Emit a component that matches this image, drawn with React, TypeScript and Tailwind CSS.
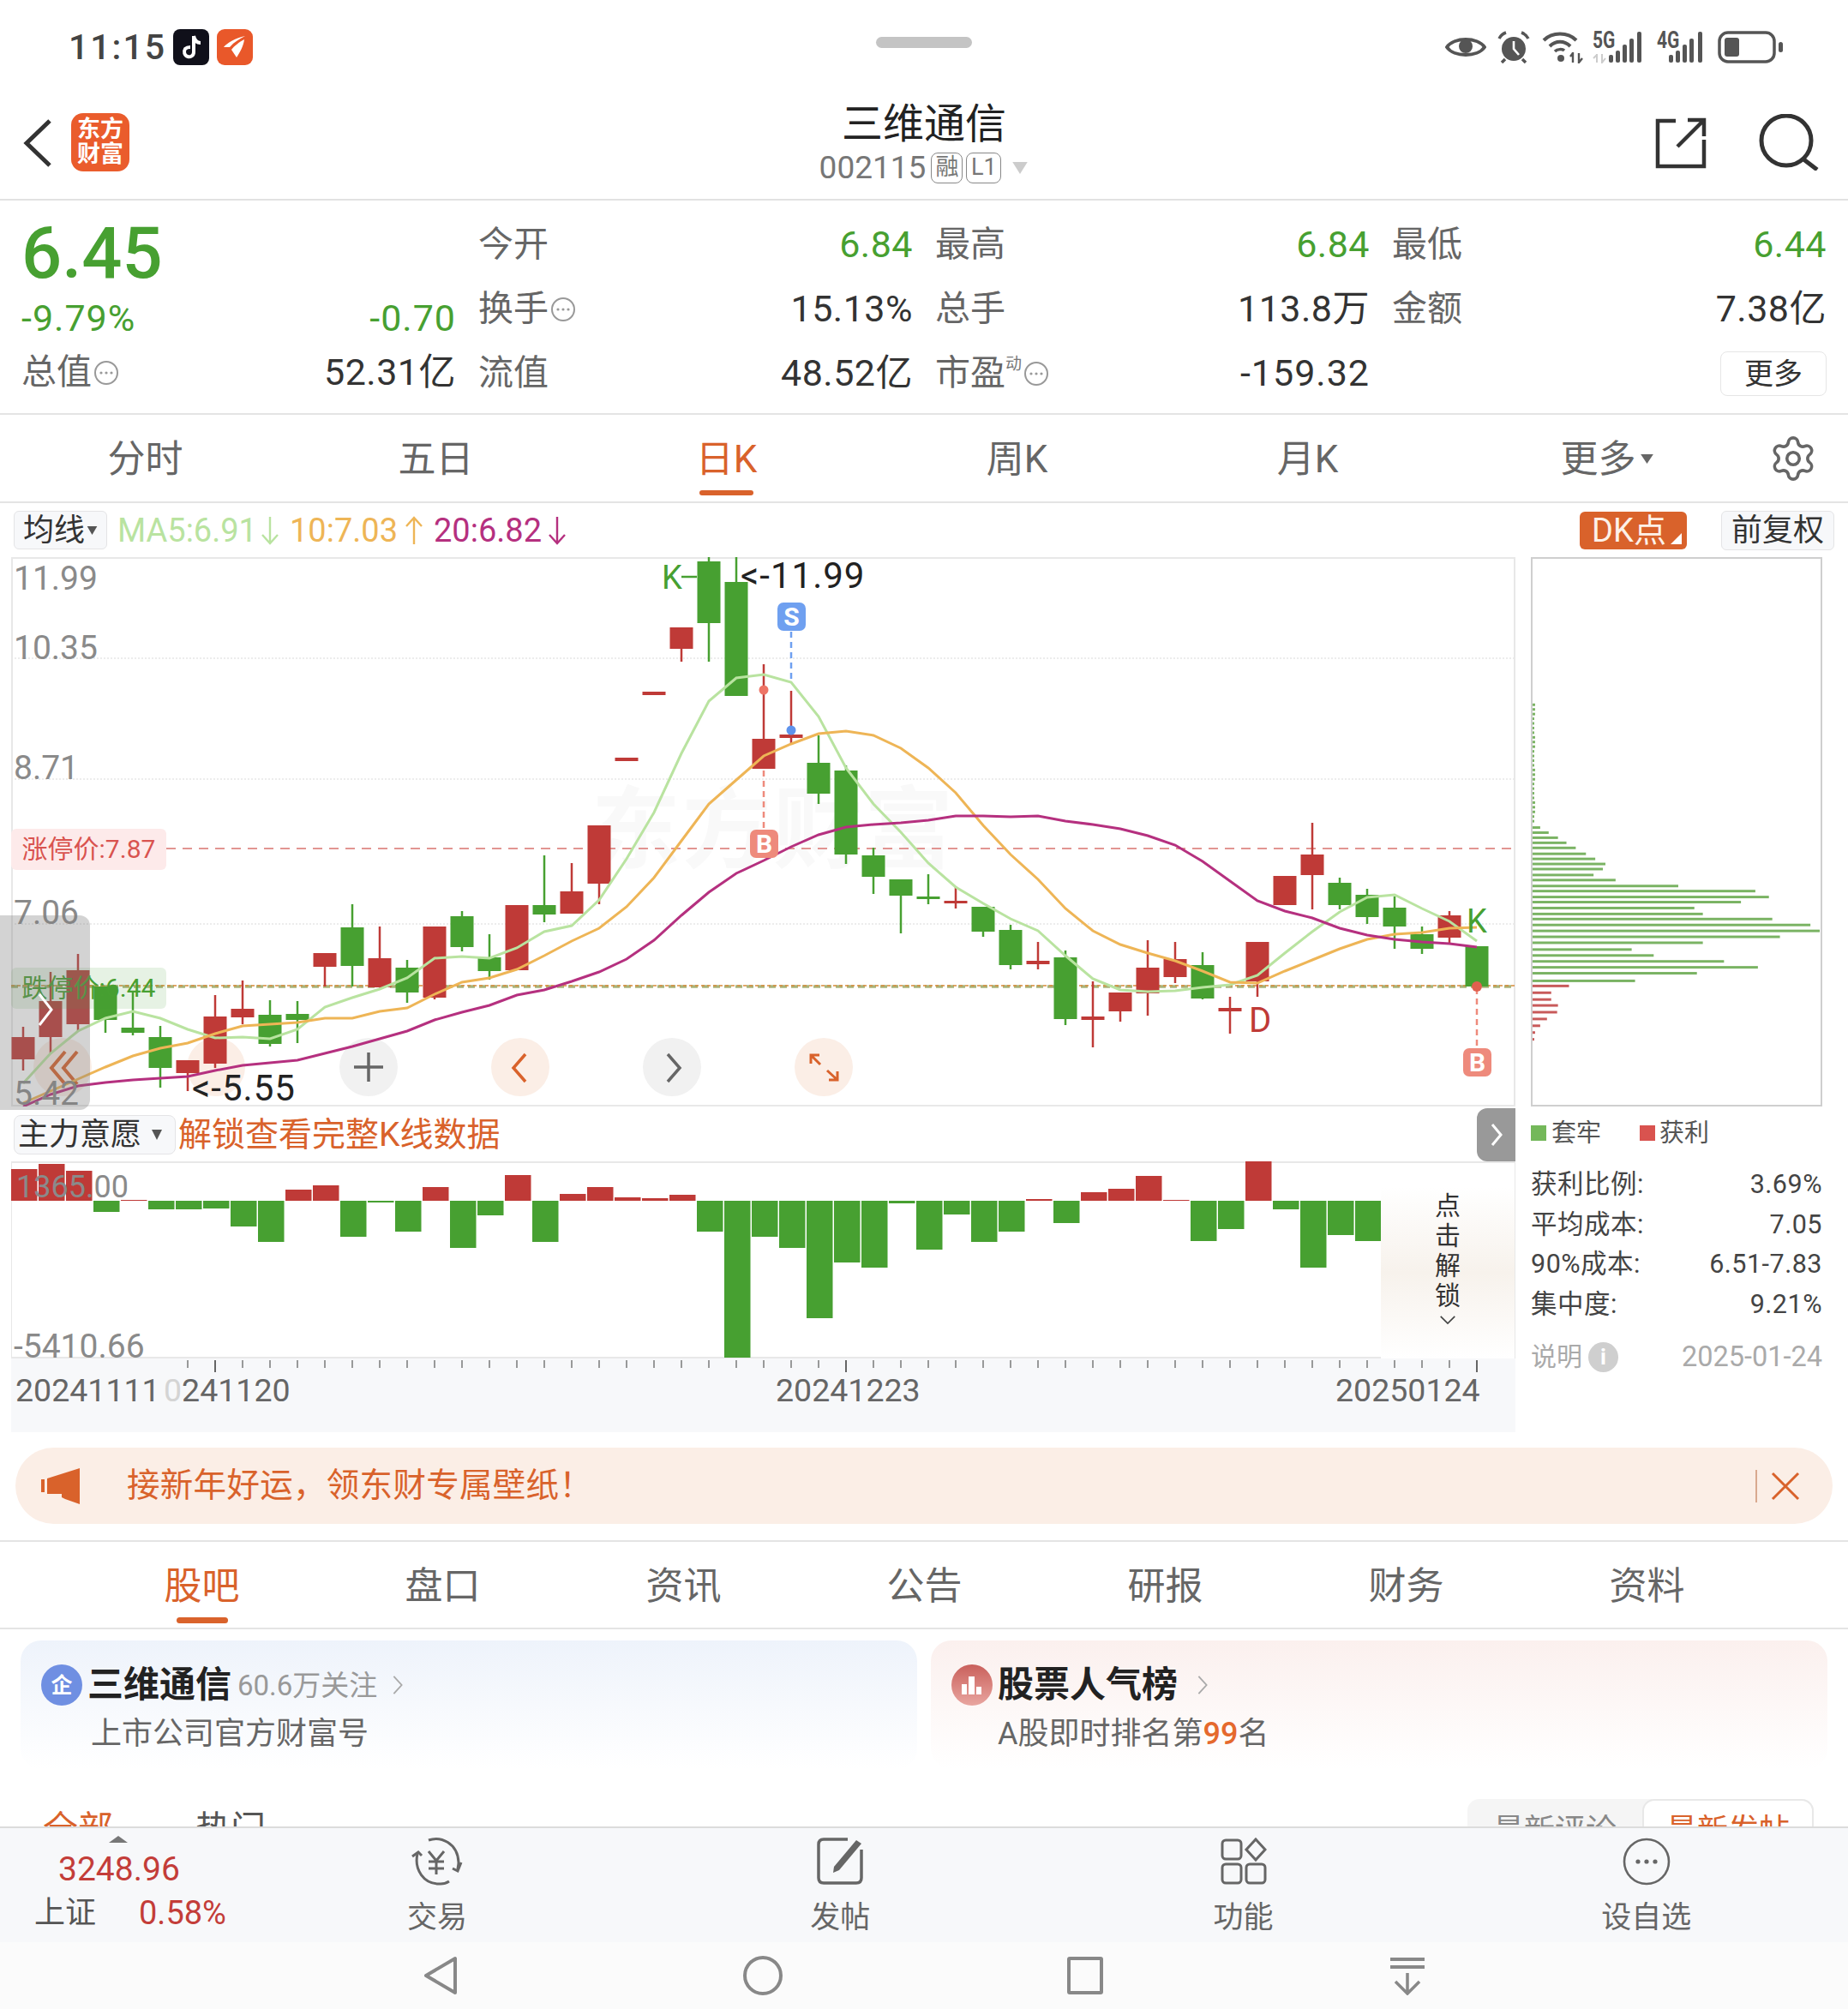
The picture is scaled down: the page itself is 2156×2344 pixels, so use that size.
import { Settings } from "lucide-react";

const RED = "#bf3a37";
const GREEN = "#47a031";

// wickTop, wickBottom, bodyTop, bodyBottom, colour
type Candle = [number, number, number, number, "r" | "g"];

const candles: Candle[] = [
  [1199, 1250, 1211, 1237, "r"],
  [1135, 1230, 1169, 1211, "r"],
  [1114, 1204, 1133, 1196, "r"],
  [1152, 1206, 1152, 1191, "g"],
  [1158, 1209, 1200, 1206, "g"],
  [1198, 1270, 1211, 1247, "g"],
  [1238, 1274, 1238, 1253, "r"],
  [1162, 1247, 1187, 1242, "r"],
  [1145, 1196, 1178, 1188, "r"],
  [1168, 1222, 1185, 1219, "g"],
  [1169, 1218, 1184, 1191, "g"],
  [1113, 1152, 1113, 1129, "r"],
  [1056, 1152, 1083, 1128, "g"],
  [1082, 1153, 1119, 1153, "r"],
  [1121, 1171, 1130, 1159, "g"],
  [1082, 1167, 1082, 1165, "r"],
  [1064, 1111, 1070, 1106, "g"],
  [1091, 1144, 1118, 1134, "g"],
  [1057, 1133, 1057, 1133, "r"],
  [999, 1077, 1057, 1068, "g"],
  [1008, 1067, 1041, 1067, "r"],
  [964, 1056, 964, 1032, "r"],
  [885, 889, 885, 889, "r"],
  [808, 812, 808, 812, "r"],
  [733, 773, 733, 758, "r"],
  [651, 773, 656, 728, "g"],
  [651, 813, 680, 813, "g"],
  [776, 898, 863, 898, "r"],
  [807, 868, 858, 862, "r"],
  [859, 939, 891, 927, "g"],
  [894, 1009, 900, 998, "g"],
  [990, 1044, 999, 1024, "g"],
  [1027, 1090, 1027, 1046, "g"],
  [1021, 1056, 1047, 1050, "g"],
  [1035, 1061, 1052, 1055, "r"],
  [1059, 1094, 1059, 1088, "g"],
  [1080, 1132, 1086, 1127, "g"],
  [1100, 1132, 1122, 1126, "r"],
  [1110, 1197, 1118, 1190, "g"],
  [1146, 1223, 1187, 1191, "r"],
  [1159, 1193, 1159, 1181, "r"],
  [1098, 1186, 1130, 1160, "r"],
  [1100, 1148, 1120, 1141, "r"],
  [1112, 1167, 1127, 1166, "g"],
  [1164, 1207, 1177, 1181, "r"],
  [1100, 1164, 1100, 1146, "r"],
  [1023, 1057, 1023, 1057, "r"],
  [961, 1062, 998, 1022, "r"],
  [1025, 1062, 1031, 1057, "g"],
  [1038, 1079, 1045, 1071, "g"],
  [1047, 1108, 1060, 1082, "g"],
  [1082, 1114, 1091, 1108, "g"],
  [1064, 1102, 1069, 1095, "r"],
  [1105, 1153, 1105, 1152, "g"],
];

const ma5 = [
  1265, 1230, 1204, 1189, 1181, 1189, 1202, 1212, 1211, 1213, 1202, 1176, 1165, 1155, 1142, 1119, 1117, 1119, 1107,
  1088, 1081, 1051, 1003, 949, 880, 819, 792, 788, 797, 837, 897, 939, 972, 1008, 1036, 1055, 1073, 1087, 1116, 1143,
  1156, 1158, 1157, 1153, 1150, 1139, 1113, 1088, 1065, 1048, 1045, 1061, 1076, 1099,
];
const ma10 = [
  1288, 1274, 1260, 1246, 1233, 1224, 1218, 1207, 1198, 1196, 1194, 1189, 1189, 1181, 1177, 1161, 1147, 1142, 1132,
  1116, 1099, 1084, 1059, 1025, 982, 939, 911, 883, 869, 857, 854, 859, 874, 897, 926, 964, 998, 1027, 1061, 1087, 1103,
  1113, 1122, 1134, 1147, 1148, 1134, 1121, 1108, 1097, 1091, 1089, 1084, 1083,
];
const ma20 = [
  1292, 1278, 1268, 1264, 1261, 1259, 1257, 1250, 1244, 1241, 1238, 1230, 1222, 1213, 1204, 1191, 1182, 1174, 1162,
  1156, 1146, 1135, 1120, 1098, 1069, 1042, 1020, 1005, 989, 975, 966, 963, 961, 958, 953, 953, 954, 953, 959, 963, 968,
  976, 987, 1006, 1029, 1052, 1064, 1072, 1084, 1092, 1097, 1100, 1102, 1106,
];

const flows = [
  37, 43, 35, -13, 1, -10, -10, -9, -30, -48, 13, 18, -42, -2, -36, 16, -55, -17, 30, -48, 8, 16, 4, 3, 7, -36, -183,
  -42, -55, -137, -72, -78, -3, -57, -16, -48, -36, 2, -26, 10, 14, 29, 1, -47, -33, 46, -10, -78, -40, -47,
];

// y, width
const chipsUp: [number, number][] = [
  [965, 9], [971, 19], [977, 30], [983, 40], [989, 51], [996, 63], [1002, 74], [1008, 86], [1014, 83], [1021, 72],
  [1027, 98], [1034, 172], [1040, 263], [1047, 279], [1053, 246], [1060, 191], [1067, 201], [1073, 283], [1080, 328],
  [1087, 339], [1094, 292], [1101, 201], [1109, 117], [1116, 143], [1123, 226], [1130, 266], [1137, 194], [1146, 121],
];
const chipsDown: [number, number][] = [
  [1152, 43], [1160, 22], [1168, 22], [1175, 30], [1183, 29], [1191, 17], [1199, 9], [1207, 3], [1215, 2],
];
const chipsThin = Array.from({ length: 26 }, (_, i) => 820 + i * 5.5);

const line = (ys: number[]) => ys.map((y, i) => `${27 + 32 * i},${y}`).join(" ");

function DotsIcon() {
  return (
    <svg viewBox="0 0 30 30" className="ml-[2px] h-[30px] w-[30px]" fill="none">
      <circle cx="15" cy="15" r="13" stroke="#999" strokeWidth="2" />
      <circle cx="9" cy="15" r="1.6" fill="#999" />
      <circle cx="15" cy="15" r="1.6" fill="#999" />
      <circle cx="21" cy="15" r="1.6" fill="#999" />
    </svg>
  );
}

function Arrow({ up, color }: { up?: boolean; color: string }) {
  return (
    <svg viewBox="0 0 22 36" className={up ? "h-[36px] w-[22px] rotate-180" : "h-[36px] w-[22px]"} fill="none">
      <path d="M11 2V33M2 23L11 33L20 23" stroke={color} strokeWidth="2.4" />
    </svg>
  );
}

function Cell({
  label,
  value,
  valueClass = "text-[#333]",
  children,
}: {
  label: string;
  value?: string;
  valueClass?: string;
  children?: React.ReactNode;
}) {
  return (
    <div className="flex items-center justify-between">
      <span className="flex items-center text-[41px] leading-none text-[#666]">
        {label}
        {children}
      </span>
      {value && <span className={`text-[43px] leading-none tracking-[0.5px] ${valueClass}`}>{value}</span>}
    </div>
  );
}

function StatusIcons() {
  return (
    <div className="flex items-center justify-end pr-[76px]">
      <svg viewBox="0 0 48 32" className="h-[32px] w-[48px]" fill="none">
        <path d="M2 16C10 4 38 4 46 16C38 28 10 28 2 16Z" stroke="#555" strokeWidth="4" />
        <circle cx="24" cy="15" r="8" fill="#555" />
      </svg>
      <svg viewBox="0 0 38 38" className="ml-[13px] h-[38px] w-[38px]" fill="none">
        <circle cx="19" cy="21" r="14" fill="#555" />
        <path d="M19 12V21L25 28" stroke="#fff" strokeWidth="2.6" />
        <path d="M2 9C4 5 7 3 10 2M36 9C34 5 31 3 28 2" stroke="#555" strokeWidth="3.5" />
        <path d="M9 33L5 37M29 33L33 37" stroke="#555" strokeWidth="3.5" />
      </svg>
      <svg viewBox="0 0 48 38" className="ml-[14px] h-[38px] w-[48px]" fill="none">
        <path d="M2 11C12 1 30 1 40 11M9 18C16 11 26 11 33 18" stroke="#555" strokeWidth="4" />
        <path d="M15 24C18 21 24 21 26 23" stroke="#555" strokeWidth="3.5" />
        <circle cx="22" cy="32" r="4" fill="#555" />
        <path d="M36 25V37M33 30L36 26M43 26V37L47 32" stroke="#555" strokeWidth="2.4" />
      </svg>
      <div className="relative ml-[11px] h-[38px] w-[62px]">
        <svg viewBox="0 0 62 38" className="h-[38px] w-[62px]">
          <rect x="19" y="28" width="5" height="9" rx="2" fill="#555" />
          <rect x="27" y="23" width="5" height="14" rx="2" fill="#555" />
          <rect x="35" y="16" width="5" height="21" rx="2" fill="#555" />
          <rect x="43" y="9" width="5" height="28" rx="2" fill="#555" />
          <rect x="52" y="1" width="5" height="36" rx="2" fill="#555" />
          <path d="M5 27V37M1 32L5 28M11 27V37L15 32" stroke="#ccc" strokeWidth="2" fill="none" />
        </svg>
        <span className="absolute left-0 top-[-2px] origin-top scale-y-[1.3] text-[21px] font-bold leading-none text-[#555]">5G</span>
      </div>
      <div className="relative ml-[13px] h-[38px] w-[56px]">
        <svg viewBox="0 0 56 38" className="h-[38px] w-[56px]">
          <rect x="14" y="28" width="5" height="9" rx="2" fill="#555" />
          <rect x="22" y="23" width="5" height="14" rx="2" fill="#555" />
          <rect x="30" y="16" width="5" height="21" rx="2" fill="#555" />
          <rect x="38" y="9" width="5" height="28" rx="2" fill="#555" />
          <rect x="48" y="1" width="5" height="36" rx="2" fill="#555" />
        </svg>
        <span className="absolute left-0 top-[-2px] origin-top scale-y-[1.3] text-[21px] font-bold leading-none text-[#555]">4G</span>
      </div>
      <svg viewBox="0 0 76 38" className="ml-[15px] h-[38px] w-[76px]" fill="none">
        <rect x="2" y="2" width="64" height="34" rx="10" stroke="#555" strokeWidth="3.5" />
        <rect x="8" y="8" width="17" height="22" rx="3" fill="#555" />
        <rect x="71" y="13" width="5" height="12" rx="2.5" fill="#555" />
      </svg>
    </div>
  );
}

function Top() {
  return (
    <div className="h-[234px] shrink-0 border-b-2 border-[#e2e2e2]">
      <div className="grid h-[110px] grid-cols-[1fr_112px_1fr]">
        <div className="flex items-center pl-[80px]">
          <span className="w-[122px] text-[41px] font-medium leading-none tracking-[2px] text-[#444]">11:15</span>
          <svg viewBox="0 0 42 42" className="h-[42px] w-[42px]">
            <rect width="42" height="42" rx="8" fill="#10101a" />
            <path
              d="M24 8V27C24 31 20 33 17 32C13 31 12 26 14 23C16 21 18 21 20 21M24 8C25 13 28 16 32 16"
              stroke="#fff"
              strokeWidth="4"
              fill="none"
            />
          </svg>
          <svg viewBox="0 0 42 42" className="ml-[9px] h-[42px] w-[42px]">
            <rect width="42" height="42" rx="9" fill="#e9582a" />
            <path d="M33 8C22 10 12 16 8 21L15 21C20 15 27 11 33 8ZM32 12C26 15 20 20 17 24L23 33C27 27 31 20 32 12Z" fill="#fff" />
          </svg>
        </div>
        <div className="flex items-start justify-center pt-[43px]">
          <div className="h-[13px] w-[112px] rounded-full bg-[#c4c4c4]" />
        </div>
        <StatusIcons />
      </div>
      <div className="grid h-[122px] grid-cols-[1fr_auto_1fr]">
        <div className="flex items-start pl-[27px] pt-[22px]">
          <svg viewBox="0 0 34 58" className="mt-[6px] h-[58px] w-[34px]" fill="none">
            <path d="M31 3L4 29L31 55" stroke="#333" strokeWidth="5" />
          </svg>
          <div className="ml-[22px] flex h-[68px] w-[68px] flex-col items-center justify-center rounded-[14px] bg-[#ea5c2c] text-[27px] font-bold leading-[29px] text-white">
            <span>东方</span>
            <span>财富</span>
          </div>
        </div>
        <div className="flex flex-col items-center pt-[3px]">
          <span className="text-[48px] leading-[64px] text-[#222]">三维通信</span>
          <div className="flex items-center">
            <span className="text-[37px] leading-none text-[#777]">002115</span>
            <span className="ml-[6px] flex h-[36px] w-[37px] items-center justify-center rounded-[8px] border border-[#888] text-[27px] leading-none text-[#777]">
              融
            </span>
            <span className="ml-[4px] flex h-[36px] w-[41px] items-center justify-center rounded-[8px] border border-[#888] text-[27px] leading-none text-[#777]">
              L1
            </span>
            <svg viewBox="0 0 20 16" className="ml-[12px] h-[14px] w-[20px]">
              <path d="M0 0H20L10 16Z" fill="#ccc" />
            </svg>
          </div>
        </div>
        <div className="flex items-start justify-end pr-[33px] pt-[23px]">
          <svg viewBox="0 0 60 60" className="mt-[4px] h-[60px] w-[60px]" fill="none">
            <path d="M24 4H3V57H57V26M26 34L56 4M38 3H57V22" stroke="#333" strokeWidth="4.5" />
          </svg>
          <svg viewBox="0 0 72 66" className="ml-[60px] h-[66px] w-[72px]" fill="none">
            <circle cx="33" cy="31" r="29" stroke="#333" strokeWidth="5" />
            <path d="M52 52L69 65" stroke="#333" strokeWidth="5" />
          </svg>
        </div>
      </div>
    </div>
  );
}

function Quote() {
  return (
    <div className="flex h-[250px] shrink-0 gap-x-[26px] border-b-2 border-[#e4e4e4] px-[25px]">
      <div className="flex w-[507px] flex-col">
        <div className="flex h-[120px] items-center pt-[2px]">
          <span className="text-[83px] font-medium leading-none text-[#47a031]">6.45</span>
        </div>
        <div className="flex h-[34px] items-center justify-between text-[43px] leading-none tracking-[1px] text-[#47a031]">
          <span>-9.79%</span>
          <span>-0.70</span>
        </div>
        <div className="mt-[25px] h-[36px]">
          <Cell label="总值" value="52.31亿">
            <DotsIcon />
          </Cell>
        </div>
      </div>
      <div className="grid flex-1 grid-cols-3 auto-rows-[75px] gap-x-[26px] pt-[14px]">
        <Cell label="今开" value="6.84" valueClass="text-[#47a031]" />
        <Cell label="最高" value="6.84" valueClass="text-[#47a031]" />
        <Cell label="最低" value="6.44" valueClass="text-[#47a031]" />
        <Cell label="换手" value="15.13%">
          <DotsIcon />
        </Cell>
        <Cell label="总手" value="113.8万" />
        <Cell label="金额" value="7.38亿" />
        <Cell label="流值" value="48.52亿" />
        <div className="flex items-center justify-between">
          <span className="flex items-center text-[41px] leading-none text-[#666]">
            市盈
            <span className="mb-[22px] self-start text-[19px] leading-[30px] text-[#777]">动</span>
            <DotsIcon />
          </span>
          <span className="text-[43px] leading-none tracking-[1px] text-[#333]">-159.32</span>
        </div>
        <div className="flex items-center justify-between">
          <span />
          <span className="flex h-[52px] w-[124px] items-center justify-center rounded-[8px] border border-[#e6e6e6] text-[34px] leading-none text-[#333]">
            更多
          </span>
        </div>
      </div>
    </div>
  );
}

function ChartTabs() {
  const tabs = ["分时", "五日", "日K", "周K", "月K"];
  return (
    <div className="flex h-[103px] shrink-0 items-center border-b-2 border-[#e4e4e4]">
      {tabs.map((t) => (
        <div key={t} className="relative flex h-full w-[339px] items-center justify-center pt-[2px]">
          <span className={t === "日K" ? "text-[44px] leading-none text-[#d9622b]" : "text-[44px] leading-none text-[#666]"}>
            {t}
          </span>
          {t === "日K" && <div className="absolute bottom-[7px] h-[6px] w-[63px] rounded-full bg-[#d9622b]" />}
        </div>
      ))}
      <div className="flex h-full w-[339px] items-center justify-center pl-[20px] pt-[2px]">
        <span className="text-[44px] leading-none text-[#666]">更多</span>
        <svg viewBox="0 0 16 12" className="ml-[5px] h-[11px] w-[15px]">
          <path d="M0 0H16L8 12Z" fill="#666" />
        </svg>
      </div>
      <Settings className="ml-[29px] h-[58px] w-[58px] text-[#666]" strokeWidth={1.5} />
    </div>
  );
}

function IndicatorRow() {
  return (
    <div className="flex h-[63px] shrink-0 items-center pl-[16px] pr-[16px]">
      <div className="flex h-[45px] w-[109px] items-center justify-center rounded-[6px] border border-[#e4e4e6] bg-[#f7f8fa] text-[36px] leading-none text-[#333]">
        均线
        <svg viewBox="0 0 14 12" className="ml-[2px] h-[10px] w-[13px]">
          <path d="M0 0H14L7 12Z" fill="#555" />
        </svg>
      </div>
      <div className="flex items-center pl-[12px] text-[38px] leading-none">
        <span className="w-[167px] text-[#b9e3a0]">MA5:6.91</span>
        <Arrow color="#b9e3a0" />
        <span className="ml-[12px] w-[134px] text-[#eeb556]">10:7.03</span>
        <Arrow up color="#eeb556" />
        <span className="ml-[12px] w-[133px] text-[#b5307f]">20:6.82</span>
        <Arrow color="#b5307f" />
      </div>
      <div className="relative ml-auto flex h-[44px] w-[125px] items-center justify-center rounded-[6px] bg-[#d9622b] pr-[10px] text-[38px] leading-none text-[#fdf1e8]">
        DK点
        <svg viewBox="0 0 14 14" className="absolute bottom-[6px] right-[6px] h-[13px] w-[13px]">
          <path d="M14 0V14H0Z" fill="#fff" />
        </svg>
      </div>
      <div className="ml-[40px] flex h-[46px] w-[132px] items-center justify-center rounded-[6px] border border-[#e4e4e6] bg-[#f7f8fa] text-[36px] leading-none text-[#333]">
        前复权
      </div>
    </div>
  );
}

function CircleBtn({ cx, fill, children }: { cx: number; fill: string; children?: React.ReactNode }) {
  return (
    <g>
      <circle cx={cx} cy="1246" r="34" fill={fill} />
      {children}
    </g>
  );
}

function MainChart() {
  return (
    <div className="relative h-[641px] border-x-2 border-y-2 border-[#e8e8e8]">
      <svg viewBox="13 651 1755 641" className="absolute left-[-2px] top-[-2px] h-[641px] w-[1755px]" fill="none">
        <text x="690" y="1006" fontSize="104" fontWeight="700" letterSpacing="2" fill="#f9f9f9">
          东方财富
        </text>
        {[769, 910, 1079].map((y) => (
          <line key={y} x1="13" x2="1768" y1={y} y2={y} stroke="#e6e6e6" strokeWidth="1.5" strokeDasharray="2 2" />
        ))}
        <line x1="194" x2="1768" y1="991" y2="991" stroke="#d9736f" strokeWidth="1.6" strokeDasharray="11 8" />
        <line x1="13" x2="1768" y1="1152" y2="1152" stroke="#a9b47a" strokeWidth="3.5" strokeDasharray="8 5" />
        <line x1="13" x2="1768" y1="1151" y2="1151" stroke="#d98a3a" strokeWidth="1.4" strokeDasharray="4 3" />

        <CircleBtn cx={73} fill="#fbeee6">
          <path d="M76 1228L60 1247L76 1266M90 1228L74 1247L90 1266" stroke="#d9622b" strokeWidth="4" />
        </CircleBtn>
        <CircleBtn cx={252} fill="#fbeee6" />
        <CircleBtn cx={430} fill="#f1f1f1">
          <path d="M413 1246H447M430 1229V1263" stroke="#666" strokeWidth="3.5" />
        </CircleBtn>
        <CircleBtn cx={607} fill="#fbeee6">
          <path d="M613 1231L599 1247L613 1263" stroke="#d9622b" strokeWidth="3.5" />
        </CircleBtn>
        <CircleBtn cx={784} fill="#f1f1f1">
          <path d="M779 1231L793 1247L779 1263" stroke="#666" strokeWidth="3.5" />
        </CircleBtn>
        <CircleBtn cx={961} fill="#fbeee6">
          <path
            d="M946 1232L957 1243M946 1242V1232H956M977 1261L965 1250M977 1251V1261H967"
            stroke="#d9622b"
            strokeWidth="3"
          />
        </CircleBtn>

        {candles.map(([wt, wb, bt, bb, c], i) => {
          const x = 27 + 32 * i;
          const color = c === "r" ? RED : GREEN;
          return (
            <g key={i}>
              <line x1={x} x2={x} y1={wt} y2={wb} stroke={color} strokeWidth="2.5" />
              <rect x={x - 13.5} y={bt} width="27" height={bb - bt} fill={color} />
            </g>
          );
        })}

        <line x1="795" x2="813" y1="674" y2="674" stroke={GREEN} strokeWidth="2.5" />
        <line x1="923" x2="923" y1="738" y2="796" stroke="#6fa0f0" strokeWidth="2.5" strokeDasharray="7 5" />
        <circle cx="923" cy="853" r="5.5" fill="#5f93ec" />
        <line x1="891" x2="891" y1="900" y2="969" stroke="#ee8a7c" strokeWidth="2.5" strokeDasharray="7 5" />
        <circle cx="891" cy="806" r="5.5" fill="#ee7466" />
        <line x1="1723" x2="1723" y1="1154" y2="1224" stroke="#ee8a7c" strokeWidth="2.5" strokeDasharray="7 5" />
        <circle cx="1723" cy="1152" r="6" fill="#e0604f" />

        <polyline points={line(ma5)} stroke="#b9e3a0" strokeWidth="3" />
        <polyline points={line(ma10)} stroke="#eeb556" strokeWidth="3" />
        <polyline points={line(ma20)} stroke="#b5307f" strokeWidth="3" />
      </svg>

      {[
        ["11.99", "top-[4px]"],
        ["10.35", "top-[85px]"],
        ["8.71", "top-[225px]"],
        ["7.06", "top-[394px]"],
        ["5.42", "top-[605px]"],
      ].map(([t, top]) => (
        <span key={t} className={`absolute left-[1px] ${top} text-[39px] leading-[38px] text-[#8a8a8a]`}>
          {t}
        </span>
      ))}

      <div className="absolute left-[-2px] top-[315px] flex h-[48px] w-[181px] items-center justify-center rounded-[6px] bg-[#fdeaea] text-[30px] leading-none text-[#d9534f]">
        涨停价:7.87
      </div>
      <div className="absolute left-[-2px] top-[477px] flex h-[48px] w-[181px] items-center justify-center rounded-[6px] bg-[#47a03122] text-[30px] leading-none text-[#47a031]">
        跌停价:6.44
      </div>

      <span className="absolute left-[757px] top-[3px] text-[38px] leading-[38px] text-[#47a031]">K</span>
      <span className="absolute left-[849px] top-[1px] text-[42px] leading-[38px] tracking-[1px] text-[#222]">{"<-11.99"}</span>
      <span className="absolute left-[209px] top-[599px] text-[42px] leading-[38px] tracking-[1px] text-[#222]">{"<-5.55"}</span>
      <span className="absolute left-[1442px] top-[520px] text-[40px] leading-[38px] text-[#bf3a37]">D</span>
      <span className="absolute left-[1696px] top-[404px] text-[38px] leading-[38px] text-[#47a031]">K</span>

      <span className="absolute left-[892px] top-[51px] flex h-[33px] w-[33px] items-center justify-center rounded-[7px] bg-[#6fa0f0] text-[30px] font-bold leading-none text-white">
        S
      </span>
      <span className="absolute left-[860px] top-[316px] flex h-[33px] w-[33px] items-center justify-center rounded-[7px] bg-[#ee8a7c] text-[30px] font-bold leading-none text-white">
        B
      </span>
      <span className="absolute left-[1692px] top-[571px] flex h-[33px] w-[33px] items-center justify-center rounded-[7px] bg-[#ee8a7c] text-[30px] font-bold leading-none text-white">
        B
      </span>

      <div className="absolute left-[-15px] top-[416px] flex h-[227px] w-[105px] items-start justify-center rounded-r-[12px] rounded-l-none bg-[#7a7a7a55] pt-[90px]">
        <svg viewBox="0 0 20 40" className="h-[40px] w-[20px]" fill="none">
          <path d="M3 2L17 20L3 38" stroke="#fff" strokeWidth="3" />
        </svg>
      </div>
    </div>
  );
}

function SubChart() {
  return (
    <div className="relative h-[230px] border-y-2 border-x border-[#e8e8e8]">
      <svg viewBox="13 1356 1755 230" className="absolute left-[-1px] top-[-2px] h-[230px] w-[1755px]">
        {flows.map((v, i) => (
          <rect
            key={i}
            x={13 + 32 * i}
            y={v > 0 ? 1402 - v : 1402}
            width="30.5"
            height={Math.abs(v)}
            fill={v > 0 ? RED : GREEN}
          />
        ))}
      </svg>
      <span className="absolute left-[5px] top-[9px] text-[36px] leading-[38px] text-[#8a8a8a]">1365.00</span>
      <span className="absolute left-[2px] top-[195px] text-[39px] leading-[38px] text-[#8a8a8a]">-5410.66</span>
      <div className="absolute right-0 top-[28px] flex h-[200px] w-[156px] flex-col items-center bg-gradient-to-b from-white via-[#f7f2ec] to-white pt-[4px] text-[30px] leading-[35px] text-[#333]">
        <span>点</span>
        <span>击</span>
        <span>解</span>
        <span>锁</span>
        <svg viewBox="0 0 20 12" className="mt-[6px] h-[11px] w-[20px]" fill="none">
          <path d="M1 1L10 10L19 1" stroke="#444" strokeWidth="1.8" />
        </svg>
      </div>
    </div>
  );
}

function DateAxis() {
  const ticks = Array.from({ length: 48 }, (_, i) => i + 6);
  return (
    <div className="relative h-[86px] bg-[#f7f8fa]">
      <svg viewBox="13 1586 1755 20" className="absolute left-0 top-0 h-[20px] w-[1755px]">
        {ticks.map((i) => {
          const major = i === 7 || i === 30 || i === 53;
          const x = 27 + 32 * i;
          return <line key={i} x1={x} x2={x} y1="1588" y2={major ? 1602 : 1597} stroke="#666" strokeWidth={major ? 2 : 1.3} />;
        })}
      </svg>
      <div className="flex items-center pl-[5px] pt-[18px] text-[37.5px] leading-[38px] text-[#666]">
        <span className="w-[173px]">20241111</span>
        <span className="w-[714px]">
          <span className="text-[#d4d4d4]">0</span>241120
        </span>
        <span className="w-[653px]">20241223</span>
        <span>20250124</span>
      </div>
    </div>
  );
}

function ChipChart() {
  return (
    <div className="h-[641px] border-2 border-[#cfcfcf]">
      <svg viewBox="1787 651 340 641" className="h-full w-full">
        {chipsThin.map((y, i) => (
          <rect key={y} x="1787" y={y} width={1.5 + (i % 7 < 3 ? 1.5 : 0.5)} height="3" fill="#7ab363" />
        ))}
        {chipsUp.map(([y, w]) => (
          <rect key={y} x="1787" y={y} width={w} height="3" fill="#7ab363" />
        ))}
        {chipsDown.map(([y, w]) => (
          <rect key={y} x="1787" y={y} width={w} height="3" fill="#c85a5a" />
        ))}
      </svg>
    </div>
  );
}

function ChipStats() {
  const rows = [
    ["获利比例:", "3.69%"],
    ["平均成本:", "7.05"],
    ["90%成本:", "6.51-7.83"],
    ["集中度:", "9.21%"],
  ];
  return (
    <div className="pt-[12px]">
      <div className="flex h-[38px] items-center text-[29px] leading-none text-[#555]">
        <span className="h-[18px] w-[18px] bg-[#74b85a]" />
        <span className="ml-[6px]">套牢</span>
        <span className="ml-[45px] h-[18px] w-[18px] bg-[#d9534f]" />
        <span className="ml-[5px]">获利</span>
      </div>
      <div className="pt-[18px]">
        {rows.map(([k, v]) => (
          <div key={k} className="flex h-[46.5px] items-center justify-between text-[30.5px] leading-none tracking-[0.5px] text-[#444]">
            <span>{k}</span>
            <span>{v}</span>
          </div>
        ))}
      </div>
      <div className="mt-[18px] flex h-[40px] items-center justify-between text-[30px] leading-none text-[#aaa]">
        <span className="flex items-center">
          说明
          <span className="ml-[7px] flex h-[35px] w-[35px] items-center justify-center rounded-full bg-[#cfcfcf] text-[26px] font-bold text-white">
            i
          </span>
        </span>
        <span className="text-[32.5px]">2025-01-24</span>
      </div>
    </div>
  );
}

function ChartArea() {
  return (
    <div className="flex h-[1021px] shrink-0 gap-x-[18px] pl-[13px]">
      <div className="flex w-[1755px] flex-col">
        <MainChart />
        <div className="flex h-[64px] items-center pl-[3px] pt-[2px]">
          <div className="flex h-[46px] w-[189px] items-center rounded-[8px] border border-[#e4e4e6] bg-[#f7f8fa] pl-[4px] text-[36px] leading-none text-[#333]">
            主力意愿
            <svg viewBox="0 0 14 14" className="ml-[12px] h-[12px] w-[12px]">
              <path d="M0 0H14L7 14Z" fill="#555" />
            </svg>
          </div>
          <span className="ml-[3px] text-[39px] leading-none text-[#d9622b]">解锁查看完整K线数据</span>
          <div className="ml-auto flex h-[62px] w-[45px] items-center justify-center rounded-l-[12px] bg-[#999]">
            <svg viewBox="0 0 14 28" className="h-[28px] w-[14px]" fill="none">
              <path d="M2 2L12 14L2 26" stroke="#fff" strokeWidth="3" />
            </svg>
          </div>
        </div>
        <SubChart />
        <DateAxis />
      </div>
      <div className="w-[340px]">
        <ChipChart />
        <ChipStats />
      </div>
    </div>
  );
}

function Banner() {
  return (
    <div className="mx-[18px] mt-[18px] flex h-[89px] shrink-0 items-center rounded-full bg-[#fbeee6] pl-[30px] pr-[38px]">
      <svg viewBox="0 0 48 42" className="h-[42px] w-[48px]">
        <rect x="0" y="13" width="4" height="15" fill="#d9622b" />
        <path d="M7 12L45 0V42L28 36L24 34V30H7Z" fill="#d9622b" />
      </svg>
      <span className="ml-[52px] text-[38.5px] leading-none tracking-[0.3px] text-[#d9622b]">接新年好运，领东财专属壁纸！</span>
      <div className="ml-auto h-[38px] w-[2px] bg-[#d9a98f]" />
      <svg viewBox="0 0 34 34" className="ml-[16px] h-[34px] w-[34px]" fill="none">
        <path d="M2 2L32 32M32 2L2 32" stroke="#d9622b" strokeWidth="3" />
      </svg>
    </div>
  );
}

function BarTabs() {
  const tabs = ["股吧", "盘口", "资讯", "公告", "研报", "财务", "资料"];
  return (
    <div className="mt-[19px] flex h-[104px] shrink-0 border-y-2 border-[#e4e4e4] pl-[95px]">
      {tabs.map((t, i) => (
        <div key={t} className="relative flex w-[281px] items-center justify-center pt-[4px]">
          <span className={i === 0 ? "text-[44px] leading-none text-[#d9622b]" : "text-[44px] leading-none text-[#666]"}>
            {t}
          </span>
          {i === 0 && <div className="absolute bottom-[5px] h-[7px] w-[60px] rounded-full bg-[#d9622b]" />}
        </div>
      ))}
    </div>
  );
}

function Cards() {
  return (
    <div className="relative min-h-0 flex-1 overflow-hidden">
      <div className="flex gap-x-[16px] px-[24px] pt-[13px]">
        <div className="h-[150px] w-[1046px] rounded-[24px] bg-gradient-to-b from-[#eef3fb] to-white pl-[24px] pt-[27px]">
          <div className="flex h-[50px] items-center">
            <span className="flex h-[48px] w-[48px] items-center justify-center rounded-full bg-[#6f8fe2] text-[25px] font-bold leading-none text-white">
              企
            </span>
            <span className="ml-[6px] text-[42px] font-bold leading-none text-[#222]">三维通信</span>
            <span className="ml-[7px] text-[33px] leading-none text-[#999]">60.6万关注</span>
            <svg viewBox="0 0 14 26" className="ml-[17px] h-[24px] w-[14px]" fill="none">
              <path d="M2 2L12 13L2 24" stroke="#aaa" strokeWidth="2" />
            </svg>
          </div>
          <div className="pl-[58px] pt-[14px] text-[36px] leading-none text-[#666]">上市公司官方财富号</div>
        </div>
        <div className="h-[150px] w-[1046px] rounded-[24px] bg-gradient-to-b from-[#fbf0ee] to-white pl-[24px] pt-[27px]">
          <div className="flex h-[50px] items-center">
            <span className="flex h-[48px] w-[48px] items-center justify-center rounded-full bg-gradient-to-b from-[#c9605c] to-[#e8a5a0]">
              <svg viewBox="0 0 28 24" className="h-[24px] w-[28px]" fill="#fff">
                <rect x="2" y="11" width="6" height="12" />
                <rect x="10" y="2" width="7" height="21" />
                <rect x="19" y="14" width="6" height="9" />
              </svg>
            </span>
            <span className="ml-[6px] text-[42px] font-bold leading-none text-[#222]">股票人气榜</span>
            <svg viewBox="0 0 14 26" className="ml-[22px] h-[24px] w-[14px]" fill="none">
              <path d="M2 2L12 13L2 24" stroke="#aaa" strokeWidth="2" />
            </svg>
          </div>
          <div className="pl-[54px] pt-[14px] text-[36px] leading-none text-[#666]">
            A股即时排名第<span className="font-medium text-[#e5692d]">99</span>名
          </div>
        </div>
      </div>
      <div className="flex items-start pl-[50px] pt-[50px] text-[41px] leading-none">
        <span className="text-[#d9622b]">全部</span>
        <span className="ml-[96px] text-[#555]">热门</span>
        <div className="ml-[1402px] mt-[-15px] flex h-[60px] w-[404px] rounded-t-[14px] bg-[#f5f5f5]">
          <span className="flex flex-1 justify-center pt-[19px] text-[36px] text-[#888]">最新评论</span>
          <span className="flex w-[200px] justify-center rounded-t-[14px] border-2 border-[#e8e8e8] bg-white pt-[17px] text-[36px] text-[#d9622b]">
            最新发帖
          </span>
        </div>
      </div>
    </div>
  );
}

function Dock() {
  return (
    <div className="flex h-[135px] shrink-0 border-t-2 border-[#dcdcdc] bg-[#f7f8fa]">
      <div className="relative w-[275px] shrink-0">
        <svg viewBox="0 0 22 8" className="absolute left-[127px] top-[9px] h-[8px] w-[22px]">
          <path d="M0 8L11 0L22 8Z" fill="#777" />
        </svg>
        <span className="absolute left-[68px] top-[28px] text-[39px] leading-[40px] text-[#c33d39]">3248.96</span>
        <span className="absolute left-[40px] top-[81px] text-[36px] leading-[36px] text-[#555]">上证</span>
        <span className="absolute left-[162px] top-[81px] text-[38px] leading-[36px] text-[#c33d39]">0.58%</span>
      </div>
      <DockItem label="交易">
        <svg viewBox="0 0 64 58" className="h-[58px] w-[64px]" fill="none">
          <path d="M22 4C36-1 56 7 57 30C57 33 56 36 56 38" stroke="#666" strokeWidth="3" />
          <path d="M60 30L56 40L50 37" stroke="#666" strokeWidth="3" />
          <path d="M9 20C5 38 16 56 36 55C40 55 43 54 46 52" stroke="#666" strokeWidth="3" />
          <path d="M3 23L10 18L14 22" stroke="#666" strokeWidth="3" />
          <path d="M22 17L31 28L40 17M31 28V44M22 29H40M22 37H40" stroke="#666" strokeWidth="3" />
        </svg>
      </DockItem>
      <DockItem label="发帖">
        <svg viewBox="0 0 54 56" className="h-[56px] w-[54px]" fill="none">
          <path d="M36 2H8C4 2 2 4 2 8V47C2 51 4 53 8 53H46C50 53 52 51 52 47V14" stroke="#666" strokeWidth="3.5" />
          <path d="M20 34L46 3L52 7L26 38L19 41Z" fill="#666" />
        </svg>
      </DockItem>
      <DockItem label="功能">
        <svg viewBox="0 0 54 56" className="h-[56px] w-[54px]" fill="none">
          <rect x="2" y="3" width="22" height="22" rx="4" stroke="#666" strokeWidth="3" />
          <path d="M41 2L52 14L41 26L30 14Z" stroke="#666" strokeWidth="3" />
          <rect x="2" y="31" width="22" height="22" rx="4" stroke="#666" strokeWidth="3" />
          <rect x="30" y="31" width="22" height="22" rx="4" stroke="#666" strokeWidth="3" />
        </svg>
      </DockItem>
      <DockItem label="设自选">
        <svg viewBox="0 0 56 56" className="h-[56px] w-[56px]" fill="none">
          <circle cx="28" cy="28" r="26" stroke="#666" strokeWidth="2.6" />
          <circle cx="18" cy="28" r="2.6" fill="#666" />
          <circle cx="28" cy="28" r="2.6" fill="#666" />
          <circle cx="38" cy="28" r="2.6" fill="#666" />
        </svg>
      </DockItem>
    </div>
  );
}

function DockItem({ label, children }: { label: string; children: React.ReactNode }) {
  return (
    <div className="flex w-[470.5px] flex-col items-center pt-[10px]">
      <div className="flex h-[58px] items-center">{children}</div>
      <span className="pt-[19px] text-[35px] leading-none text-[#666]">{label}</span>
    </div>
  );
}

function NavBar() {
  return (
    <div className="flex h-[78px] shrink-0 items-center justify-center bg-[#fbfbfb]">
      <div className="flex w-[376px] justify-center">
        <svg viewBox="0 0 42 46" className="h-[46px] w-[42px]" fill="none">
          <path d="M38 3V43L4 23Z" stroke="#888" strokeWidth="4" strokeLinejoin="round" />
        </svg>
      </div>
      <div className="flex w-[376px] justify-center">
        <div className="h-[46px] w-[46px] rounded-full border-[4px] border-[#888]" />
      </div>
      <div className="flex w-[376px] justify-center">
        <div className="h-[44px] w-[42px] rounded-[3px] border-[4px] border-[#888]" />
      </div>
      <div className="flex w-[376px] justify-center">
        <svg viewBox="0 0 42 46" className="h-[46px] w-[42px]" fill="none">
          <path d="M1 4H41M1 13H41" stroke="#888" strokeWidth="4" />
          <path d="M21 20V44M7 30L21 44L35 30" stroke="#888" strokeWidth="3.5" />
        </svg>
      </div>
    </div>
  );
}

export default function App() {
  return (
    <div className="flex h-[2344px] w-[2156px] flex-col overflow-hidden bg-white font-[Roboto,'Noto_Sans_CJK_SC',sans-serif]">
      <Top />
      <Quote />
      <ChartTabs />
      <IndicatorRow />
      <ChartArea />
      <Banner />
      <BarTabs />
      <Cards />
      <Dock />
      <NavBar />
    </div>
  );
}
